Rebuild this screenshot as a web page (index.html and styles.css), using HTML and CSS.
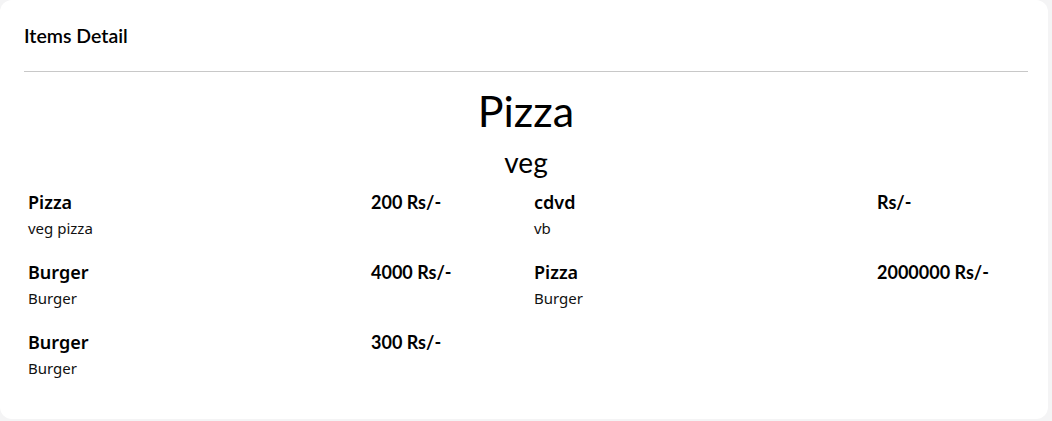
FILE: index.html
```html
<!DOCTYPE html>
<html lang="en">
<head>
    <meta charset="UTF-8">
    <meta name="viewport" content="width=device-width, initial-scale=1.0">
    <title>Items Detail</title>
    <link rel="stylesheet" href="styles.css">
</head>
<body>
    <div class="card">
        <div class="card-header">
            <h2>Items Detail</h2>
        </div>

        <div class="card-body">
            <h1 class="menu-title">Pizza</h1>
            <p class="menu-type">veg</p>

            <div class="items">
                <div class="item">
                    <div>
                        <div class="item-name">Pizza</div>
                        <div class="item-desc">veg pizza</div>
                    </div>
                    <div class="item-price">200 Rs/-</div>
                </div>
                <div class="item">
                    <div>
                        <div class="item-name">cdvd</div>
                        <div class="item-desc">vb</div>
                    </div>
                    <div class="item-price">Rs/-</div>
                </div>
                <div class="item">
                    <div>
                        <div class="item-name">Burger</div>
                        <div class="item-desc">Burger</div>
                    </div>
                    <div class="item-price">4000 Rs/-</div>
                </div>
                <div class="item">
                    <div>
                        <div class="item-name">Pizza</div>
                        <div class="item-desc">Burger</div>
                    </div>
                    <div class="item-price">2000000 Rs/-</div>
                </div>
                <div class="item">
                    <div>
                        <div class="item-name">Burger</div>
                        <div class="item-desc">Burger</div>
                    </div>
                    <div class="item-price">300 Rs/-</div>
                </div>
            </div>
        </div>
    </div>
</body>
</html>
```

FILE: styles.css
```css
body {
    font-family: 'Lato', sans-serif;
    background-color: #f4f4f5;
    margin: 0;
    padding: 0 4px 2px 0;
    color: #000;
}

.card {
    background-color: #ffffff;
    border-radius: 12px;
    height: 419px;
    box-sizing: border-box;
}

.card-header {
    margin: 0 20px 0 24px;
    padding: 25px 0 24px;
    border-bottom: 1px solid #c8c8c8;
}

.card-header h2 {
    margin: 0;
    font-size: 19.5px;
    font-weight: 600;
    line-height: 22px;
}

.card-body {
    padding: 0 8px 0 28px;
}

.menu-title {
    margin: 15px 0 0;
    padding-right: 16px;
    text-align: center;
    font-size: 43px;
    font-weight: 400;
    line-height: 48px;
}

.menu-type {
    margin: 12px 0 0;
    padding-right: 16px;
    text-align: center;
    font-size: 28px;
    line-height: 30px;
}

.items {
    display: grid;
    grid-template-columns: 1fr 1fr;
    row-gap: 18px;
    margin-top: 13px;
}

.item {
    display: grid;
    grid-template-columns: 343px 1fr;
}

.item-name {
    font-family: 'Noto Sans', sans-serif;
    font-size: 18px;
    font-weight: 600;
    line-height: 24px;
}

.item-desc {
    font-family: 'Noto Sans', sans-serif;
    font-size: 15px;
    line-height: 28px;
    color: #111;
}

.item-price {
    font-size: 18px;
    font-weight: 700;
    line-height: 24px;
}
```
